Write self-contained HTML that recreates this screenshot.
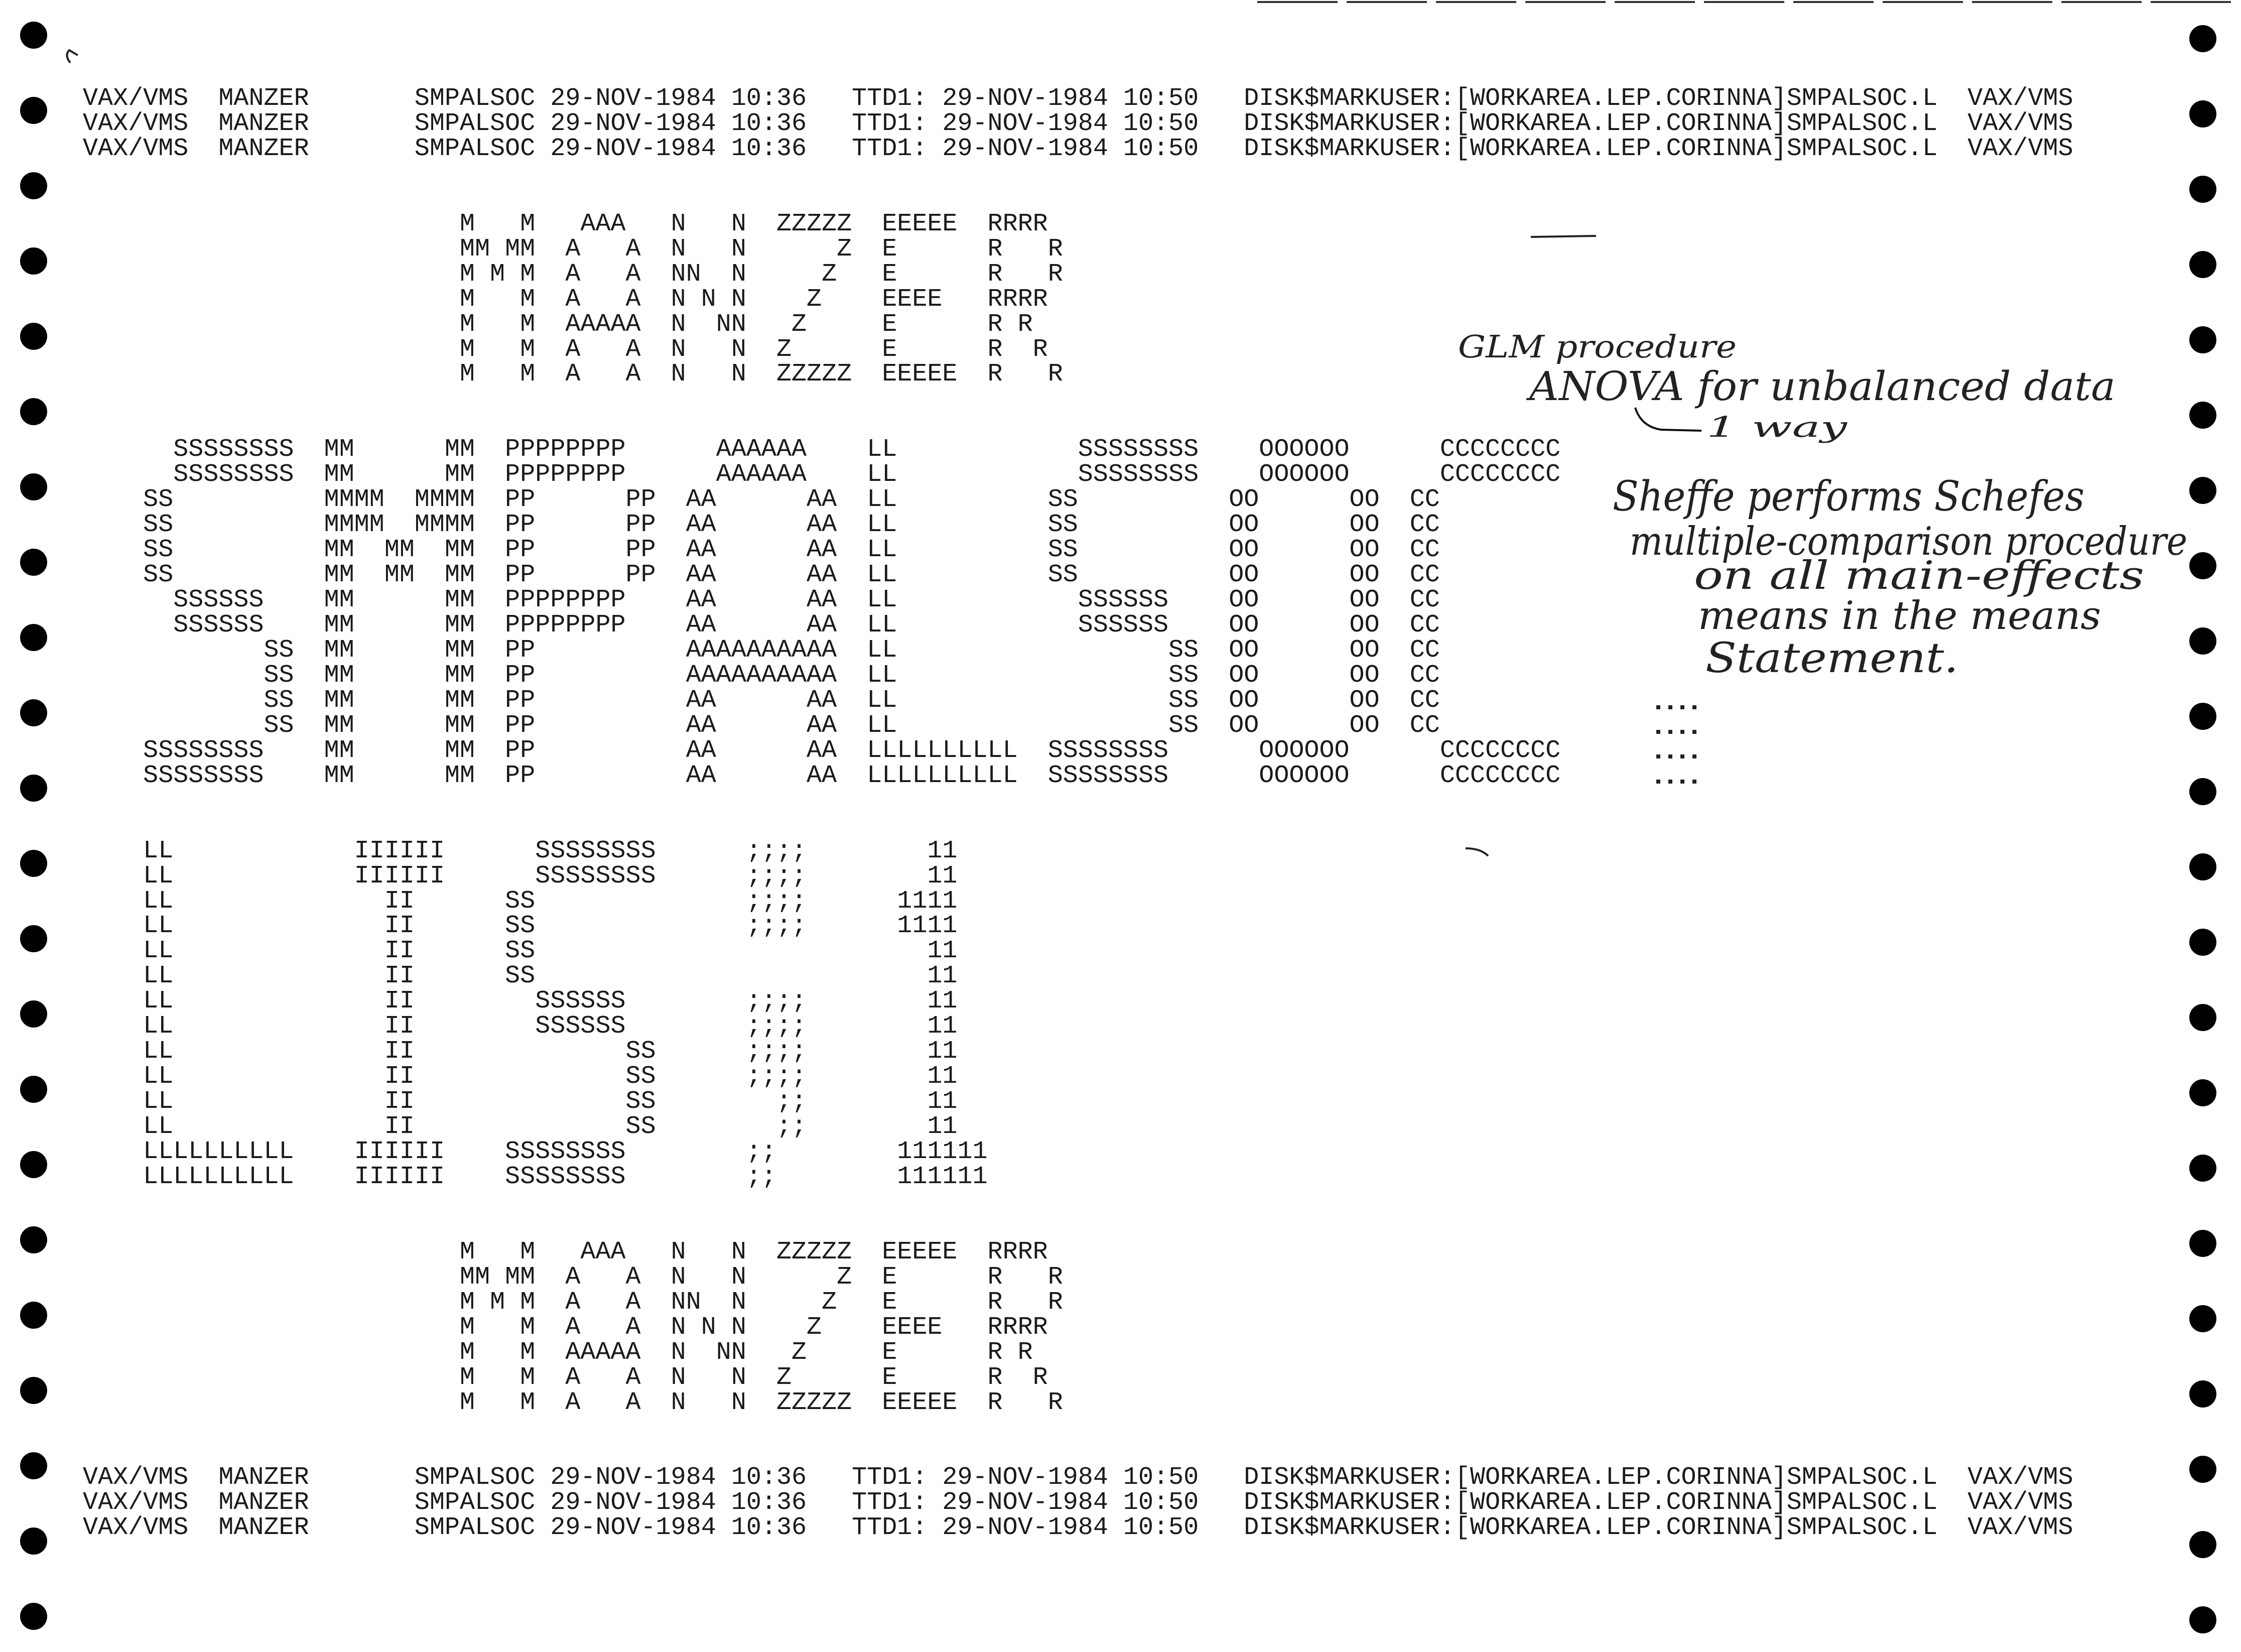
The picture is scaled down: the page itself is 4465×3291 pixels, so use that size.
<!DOCTYPE html>
<html><head><meta charset="utf-8">
<style>
html,body{margin:0;padding:0;background:#fff;}
body{width:4465px;height:3291px;position:relative;overflow:hidden;}
pre{position:absolute;left:165px;top:172px;margin:0;font-family:"Liberation Mono",monospace;font-size:50.07px;line-height:49.96px;color:#1a1a1a;}
.d{position:absolute;width:54px;height:54px;border-radius:50%;background:#000;}
.hw{position:absolute;left:0;top:0;}
</style></head><body>
<pre>
VAX/VMS  MANZER       SMPALSOC 29-NOV-1984 10:36   TTD1: 29-NOV-1984 10:50   DISK$MARKUSER:[WORKAREA.LEP.CORINNA]SMPALSOC.L  VAX/VMS
VAX/VMS  MANZER       SMPALSOC 29-NOV-1984 10:36   TTD1: 29-NOV-1984 10:50   DISK$MARKUSER:[WORKAREA.LEP.CORINNA]SMPALSOC.L  VAX/VMS
VAX/VMS  MANZER       SMPALSOC 29-NOV-1984 10:36   TTD1: 29-NOV-1984 10:50   DISK$MARKUSER:[WORKAREA.LEP.CORINNA]SMPALSOC.L  VAX/VMS


                         M   M   AAA   N   N  ZZZZZ  EEEEE  RRRR
                         MM MM  A   A  N   N      Z  E      R   R
                         M M M  A   A  NN  N     Z   E      R   R
                         M   M  A   A  N N N    Z    EEEE   RRRR
                         M   M  AAAAA  N  NN   Z     E      R R
                         M   M  A   A  N   N  Z      E      R  R
                         M   M  A   A  N   N  ZZZZZ  EEEEE  R   R


      SSSSSSSS  MM      MM  PPPPPPPP      AAAAAA    LL            SSSSSSSS    OOOOOO      CCCCCCCC
      SSSSSSSS  MM      MM  PPPPPPPP      AAAAAA    LL            SSSSSSSS    OOOOOO      CCCCCCCC
    SS          MMMM  MMMM  PP      PP  AA      AA  LL          SS          OO      OO  CC
    SS          MMMM  MMMM  PP      PP  AA      AA  LL          SS          OO      OO  CC
    SS          MM  MM  MM  PP      PP  AA      AA  LL          SS          OO      OO  CC
    SS          MM  MM  MM  PP      PP  AA      AA  LL          SS          OO      OO  CC
      SSSSSS    MM      MM  PPPPPPPP    AA      AA  LL            SSSSSS    OO      OO  CC
      SSSSSS    MM      MM  PPPPPPPP    AA      AA  LL            SSSSSS    OO      OO  CC
            SS  MM      MM  PP          AAAAAAAAAA  LL                  SS  OO      OO  CC
            SS  MM      MM  PP          AAAAAAAAAA  LL                  SS  OO      OO  CC
            SS  MM      MM  PP          AA      AA  LL                  SS  OO      OO  CC
            SS  MM      MM  PP          AA      AA  LL                  SS  OO      OO  CC
    SSSSSSSS    MM      MM  PP          AA      AA  LLLLLLLLLL  SSSSSSSS      OOOOOO      CCCCCCCC
    SSSSSSSS    MM      MM  PP          AA      AA  LLLLLLLLLL  SSSSSSSS      OOOOOO      CCCCCCCC


    LL            IIIIII      SSSSSSSS      ;;;;        11
    LL            IIIIII      SSSSSSSS      ;;;;        11
    LL              II      SS              ;;;;      1111
    LL              II      SS              ;;;;      1111
    LL              II      SS                          11
    LL              II      SS                          11
    LL              II        SSSSSS        ;;;;        11
    LL              II        SSSSSS        ;;;;        11
    LL              II              SS      ;;;;        11
    LL              II              SS      ;;;;        11
    LL              II              SS        ;;        11
    LL              II              SS        ;;        11
    LLLLLLLLLL    IIIIII    SSSSSSSS        ;;        111111
    LLLLLLLLLL    IIIIII    SSSSSSSS        ;;        111111


                         M   M   AAA   N   N  ZZZZZ  EEEEE  RRRR
                         MM MM  A   A  N   N      Z  E      R   R
                         M M M  A   A  NN  N     Z   E      R   R
                         M   M  A   A  N N N    Z    EEEE   RRRR
                         M   M  AAAAA  N  NN   Z     E      R R
                         M   M  A   A  N   N  Z      E      R  R
                         M   M  A   A  N   N  ZZZZZ  EEEEE  R   R


VAX/VMS  MANZER       SMPALSOC 29-NOV-1984 10:36   TTD1: 29-NOV-1984 10:50   DISK$MARKUSER:[WORKAREA.LEP.CORINNA]SMPALSOC.L  VAX/VMS
VAX/VMS  MANZER       SMPALSOC 29-NOV-1984 10:36   TTD1: 29-NOV-1984 10:50   DISK$MARKUSER:[WORKAREA.LEP.CORINNA]SMPALSOC.L  VAX/VMS
VAX/VMS  MANZER       SMPALSOC 29-NOV-1984 10:36   TTD1: 29-NOV-1984 10:50   DISK$MARKUSER:[WORKAREA.LEP.CORINNA]SMPALSOC.L  VAX/VMS
</pre>

<div class="d" style="left:40px;top:43px"></div>
<div class="d" style="left:40px;top:193px"></div>
<div class="d" style="left:40px;top:343px"></div>
<div class="d" style="left:40px;top:493px"></div>
<div class="d" style="left:40px;top:643px"></div>
<div class="d" style="left:40px;top:793px"></div>
<div class="d" style="left:40px;top:943px"></div>
<div class="d" style="left:40px;top:1093px"></div>
<div class="d" style="left:40px;top:1243px"></div>
<div class="d" style="left:40px;top:1393px"></div>
<div class="d" style="left:40px;top:1543px"></div>
<div class="d" style="left:40px;top:1693px"></div>
<div class="d" style="left:40px;top:1843px"></div>
<div class="d" style="left:40px;top:1993px"></div>
<div class="d" style="left:40px;top:2143px"></div>
<div class="d" style="left:40px;top:2293px"></div>
<div class="d" style="left:40px;top:2443px"></div>
<div class="d" style="left:40px;top:2593px"></div>
<div class="d" style="left:40px;top:2743px"></div>
<div class="d" style="left:40px;top:2893px"></div>
<div class="d" style="left:40px;top:3043px"></div>
<div class="d" style="left:40px;top:3193px"></div>

<div class="d" style="left:4362px;top:50px"></div>
<div class="d" style="left:4362px;top:200px"></div>
<div class="d" style="left:4362px;top:350px"></div>
<div class="d" style="left:4362px;top:500px"></div>
<div class="d" style="left:4362px;top:650px"></div>
<div class="d" style="left:4362px;top:800px"></div>
<div class="d" style="left:4362px;top:950px"></div>
<div class="d" style="left:4362px;top:1100px"></div>
<div class="d" style="left:4362px;top:1250px"></div>
<div class="d" style="left:4362px;top:1400px"></div>
<div class="d" style="left:4362px;top:1550px"></div>
<div class="d" style="left:4362px;top:1700px"></div>
<div class="d" style="left:4362px;top:1850px"></div>
<div class="d" style="left:4362px;top:2000px"></div>
<div class="d" style="left:4362px;top:2150px"></div>
<div class="d" style="left:4362px;top:2300px"></div>
<div class="d" style="left:4362px;top:2450px"></div>
<div class="d" style="left:4362px;top:2600px"></div>
<div class="d" style="left:4362px;top:2750px"></div>
<div class="d" style="left:4362px;top:2900px"></div>
<div class="d" style="left:4362px;top:3050px"></div>
<div class="d" style="left:4362px;top:3200px"></div>

<svg class="hw" width="4465" height="3291" viewBox="0 0 4465 3291">
 <g font-family="DejaVu Serif, serif" font-style="italic" fill="#222">
  <text x="2905" y="712" font-size="62" textLength="555" lengthAdjust="spacingAndGlyphs">GLM procedure</text>
  <text x="3047" y="797" font-size="80" textLength="1168" lengthAdjust="spacingAndGlyphs">ANOVA for unbalanced data</text>
  <text x="3400" y="870" font-size="56" textLength="280" lengthAdjust="spacingAndGlyphs">1 way</text>
  <text x="3213" y="1017" font-size="82" textLength="940" lengthAdjust="spacingAndGlyphs">Sheffe performs Schefes</text>
  <text x="3247" y="1105" font-size="78" textLength="1111" lengthAdjust="spacingAndGlyphs">multiple-comparison procedure</text>
  <text x="3375" y="1173" font-size="78" textLength="897" lengthAdjust="spacingAndGlyphs">on all main-effects</text>
  <text x="3383" y="1253" font-size="78" textLength="803" lengthAdjust="spacingAndGlyphs">means in the means</text>
  <text x="3398" y="1339" font-size="82" textLength="504" lengthAdjust="spacingAndGlyphs">Statement.</text>
 </g>
 <path d="M3258 812 Q3270 850 3310 856 L3390 858" fill="none" stroke="#111" stroke-width="4"/>
 <g fill="#222">
  <rect x="3300" y="1405" width="8" height="8"/><rect x="3324" y="1405" width="8" height="8"/><rect x="3348" y="1405" width="8" height="8"/><rect x="3372" y="1405" width="8" height="8"/>
  <rect x="3300" y="1454" width="8" height="8"/><rect x="3324" y="1454" width="8" height="8"/><rect x="3348" y="1454" width="8" height="8"/><rect x="3372" y="1454" width="8" height="8"/>
  <rect x="3300" y="1503" width="8" height="8"/><rect x="3324" y="1503" width="8" height="8"/><rect x="3348" y="1503" width="8" height="8"/><rect x="3372" y="1503" width="8" height="8"/>
  <rect x="3300" y="1553" width="8" height="8"/><rect x="3324" y="1553" width="8" height="8"/><rect x="3348" y="1553" width="8" height="8"/><rect x="3372" y="1553" width="8" height="8"/>
 </g>
 <path d="M3050 472 L3180 470" stroke="#222" stroke-width="4"/>
 <path d="M2920 1690 Q2950 1690 2965 1705" fill="none" stroke="#222" stroke-width="4"/>
 <path d="M2505 4 L4450 4" stroke="#333" stroke-width="4" stroke-dasharray="160 18"/>
 <path d="M140 125 Q128 110 138 100 L155 110" fill="none" stroke="#222" stroke-width="4"/>
</svg>
</body></html>
